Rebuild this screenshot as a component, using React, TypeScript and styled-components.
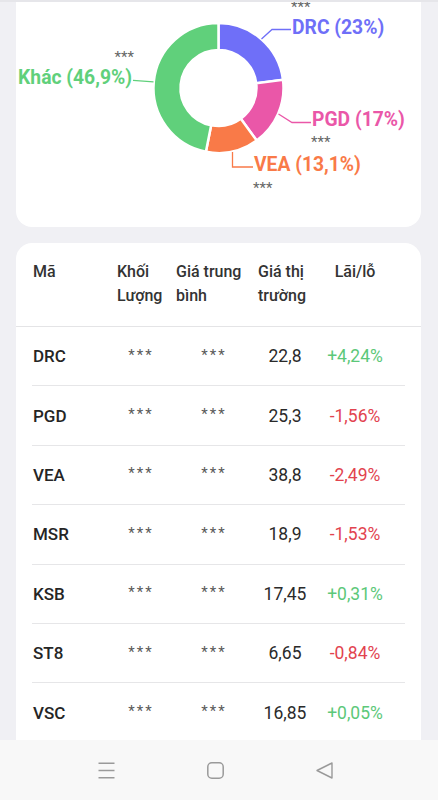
import React from 'react';
import styled, { createGlobalStyle } from 'styled-components';

const GlobalStyle = createGlobalStyle`
  html, body {
    margin: 0;
    padding: 0;
    background: #f0f0f4;
    font-family: Roboto, "Noto Sans", "Liberation Sans", sans-serif;
    overflow: hidden;
  }
`;

const Page = styled.div`
  width: 438px;
  height: 800px;
  display: flex;
  flex-direction: column;
  border-top: 2px solid #e6e6ea;
  box-sizing: border-box;
`;

const Content = styled.div`
  flex: 1;
  overflow: hidden;
  display: flex;
  flex-direction: column;
  gap: 16px;
  padding: 0 17px 0 16px;
`;

const ChartCard = styled.section`
  height: 225px;
  flex-shrink: 0;
  background: #fff;
  border-radius: 0 0 16px 16px;
  overflow: hidden;
`;

const TableCard = styled.section`
  background: #fff;
  border-radius: 16px 16px 0 0;
  flex: 1;
`;

const cols = '80px 56px 90px 54px 86px';

const HeadRow = styled.div`
  display: grid;
  grid-template-columns: ${cols};
  padding: 17px 16px 18px;
  border-bottom: 1px solid #e4e4e6;
`;

const HeadCell = styled.div<{ $pad?: number; $center?: boolean }>`
  font-size: 16px;
  font-weight: 500;
  line-height: 24px;
  color: #333;
  white-space: nowrap;
  padding-left: ${(p) => p.$pad ?? 0}px;
  text-align: ${(p) => (p.$center ? 'center' : 'left')};
`;

const Body = styled.div`
  padding: 0 16px;
`;

const Row = styled.div`
  display: grid;
  grid-template-columns: ${cols};
  align-items: center;
  height: 58.4px;
  border-bottom: 1px solid #e6e6e8;
  &:last-child {
    border-bottom: none;
  }
`;

const Code = styled.div`
  font-size: 17px;
  font-weight: 500;
  color: #252525;
  padding-left: 1px;
`;

const Hidden = styled.div`
  text-align: center;
  font-size: 15px;
  letter-spacing: 2px;
  color: #5a5a5a;
  padding: 0 0 3px 2px;
`;

const Price = styled.div`
  text-align: center;
  font-size: 17.5px;
  color: #2a2a2a;
`;

const Change = styled.div<{ $up: boolean }>`
  text-align: center;
  font-size: 17.5px;
  color: ${(p) => (p.$up ? '#5cc879' : '#e2434f')};
`;

const NavBar = styled.nav`
  height: 60px;
  flex-shrink: 0;
  background: #f8f8f8;
  display: flex;
  align-items: center;
  justify-content: center;
  gap: 92px;
  padding-right: 8px;
  color: #9a9a9a;
`;

const NavIcon = styled.svg`
  width: 17px;
  height: 17px;
  display: block;
`;

type Slice = { name: string; value: number; color: string };

const slices: Slice[] = [
  { name: 'DRC (23%)', value: 23, color: '#6f6ff8' },
  { name: 'PGD (17%)', value: 17, color: '#ea57a8' },
  { name: 'VEA (13,1%)', value: 13.1, color: '#f97a48' },
  { name: 'Khác (46,9%)', value: 46.9, color: '#60d07b' },
];

const rows = [
  { code: 'DRC', price: '22,8', change: '+4,24%', up: true },
  { code: 'PGD', price: '25,3', change: '-1,56%', up: false },
  { code: 'VEA', price: '38,8', change: '-2,49%', up: false },
  { code: 'MSR', price: '18,9', change: '-1,53%', up: false },
  { code: 'KSB', price: '17,45', change: '+0,31%', up: true },
  { code: 'ST8', price: '6,65', change: '-0,84%', up: false },
  { code: 'VSC', price: '16,85', change: '+0,05%', up: true },
];

const CX = 218.5;
const CY = 88;
const R_OUT = 65;
const R_IN = 38;

function pt(r: number, deg: number) {
  const a = (deg * Math.PI) / 180;
  return [CX + r * Math.sin(a), CY - r * Math.cos(a)];
}

function arc(a0: number, a1: number) {
  const large = a1 - a0 > 180 ? 1 : 0;
  const [x0, y0] = pt(R_OUT, a0);
  const [x1, y1] = pt(R_OUT, a1);
  const [x2, y2] = pt(R_IN, a1);
  const [x3, y3] = pt(R_IN, a0);
  return `M${x0} ${y0} A${R_OUT} ${R_OUT} 0 ${large} 1 ${x1} ${y1} L${x2} ${y2} A${R_IN} ${R_IN} 0 ${large} 0 ${x3} ${y3} Z`;
}

const labelText = {
  fontFamily: 'Roboto, "Noto Sans", sans-serif',
  fontWeight: 700,
  fontSize: 19.3,
};

const maskText = {
  fontFamily: 'Roboto, "Noto Sans", sans-serif',
  fontSize: 15,
  fill: '#666',
};

function Donut() {
  let acc = 0;
  const paths = slices.map((s) => {
    const a0 = (acc / 100) * 360;
    acc += s.value;
    const a1 = (acc / 100) * 360;
    return <path key={s.name} d={arc(a0, a1)} fill={s.color} stroke="#fff" strokeWidth={2.5} />;
  });

  return (
    <svg width="405" height="225" viewBox="16 2 405 225">
      {paths}

      {/* DRC */}
      <polyline points="261.5,39 272,29.5 291,29.5" fill="none" stroke="#6f6ff8" strokeWidth={1.3} />
      <text x={292} y={33.5} fill="#6f6ff8" style={labelText}>DRC (23%)</text>
      <text x={291} y={12} style={maskText}>***</text>

      {/* PGD */}
      <polyline points="278.5,114 292,122.5 311,122.5" fill="none" stroke="#ea57a8" strokeWidth={1.3} />
      <text x={312} y={125.5} fill="#ea57a8" style={labelText}>PGD (17%)</text>
      <text x={311} y={147} style={maskText}>***</text>

      {/* VEA */}
      <polyline points="232.5,152 232.5,167 253,167" fill="none" stroke="#f97a48" strokeWidth={1.3} />
      <text x={254} y={171} fill="#f97a48" style={labelText}>VEA (13,1%)</text>
      <text x={253} y={193} style={maskText}>***</text>

      {/* Khác */}
      <polyline points="153.5,81.8 133,80.3" fill="none" stroke="#60d07b" strokeWidth={1.3} />
      <text x={132} y={83.5} textAnchor="end" fill="#60d07b" style={labelText}>Khác (46,9%)</text>
      <text x={134} y={62} textAnchor="end" style={maskText}>***</text>
    </svg>
  );
}

export default function App() {
  return (
    <Page>
      <GlobalStyle />
      <Content>
        <ChartCard>
          <Donut />
        </ChartCard>

        <TableCard>
          <HeadRow>
            <HeadCell $pad={1}>Mã</HeadCell>
            <HeadCell $pad={5}>
              Khối
              <br />
              Lượng
            </HeadCell>
            <HeadCell $pad={8}>
              Giá trung
              <br />
              bình
            </HeadCell>
            <HeadCell>
              Giá thị
              <br />
              trường
            </HeadCell>
            <HeadCell $center>Lãi/lỗ</HeadCell>
          </HeadRow>

          <Body>
            {rows.map((r) => (
              <Row key={r.code}>
                <Code>{r.code}</Code>
                <Hidden>***</Hidden>
                <Hidden>***</Hidden>
                <Price>{r.price}</Price>
                <Change $up={r.up}>{r.change}</Change>
              </Row>
            ))}
          </Body>
        </TableCard>
      </Content>

      <NavBar>
        <NavIcon viewBox="0 0 17 17">
          <path d="M0.5 1.2H16.5M0.5 8.5H16.5M0.5 15.8H16.5" stroke="currentColor" strokeWidth={1.6} fill="none" />
        </NavIcon>
        <NavIcon viewBox="0 0 17 17">
          <rect x="0.8" y="0.8" width="15.4" height="15.4" rx="4" stroke="currentColor" strokeWidth={1.5} fill="none" />
        </NavIcon>
        <NavIcon viewBox="0 0 17 17">
          <path d="M16 1 L1 8.5 L16 16 Z" stroke="currentColor" strokeWidth={1.4} strokeLinejoin="round" fill="none" />
        </NavIcon>
      </NavBar>
    </Page>
  );
}
